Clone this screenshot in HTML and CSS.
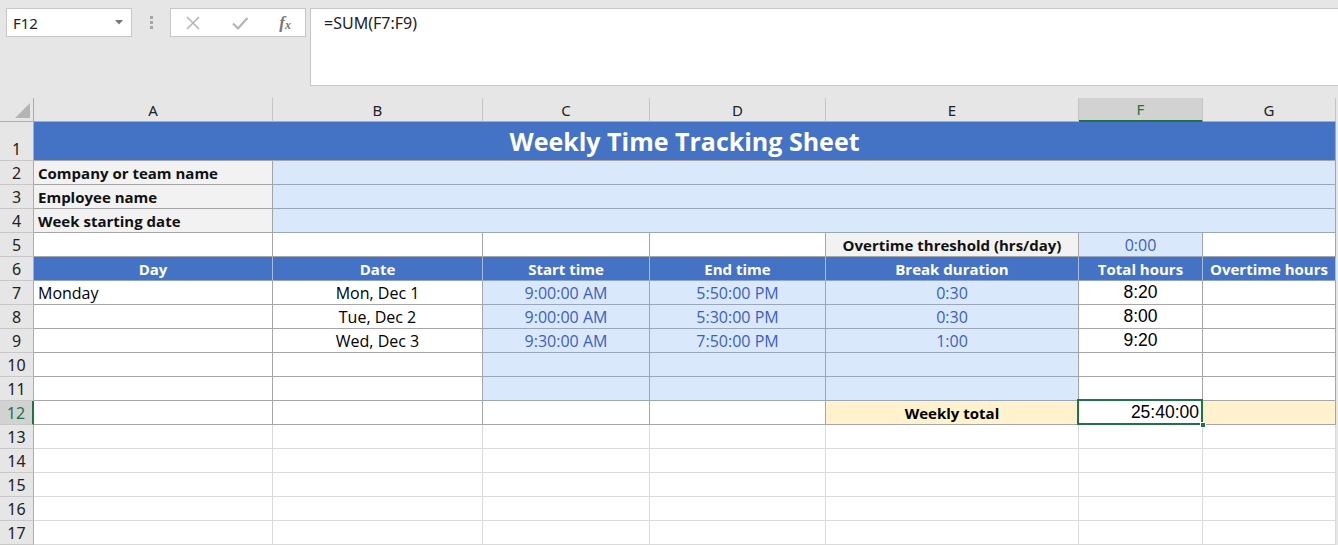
FILE: index.html
```html
<!DOCTYPE html>
<html lang="en">
<head>
  <meta charset="UTF-8">
  <title>Weekly Time Tracking Sheet</title>
  <link rel="stylesheet" href="styles.css">
</head>
<body>
  <!-- Formula bar -->
  <div class="toolbar">
    <div class="namebox">
      <span>F12</span>
      <svg class="caret" width="8" height="5" viewBox="0 0 8 5"><path d="M0 0h8L4 4.5z" fill="#777"/></svg>
    </div>
    <div class="grip"><i></i><i></i><i></i></div>
    <div class="fx-buttons">
      <svg width="16" height="16" viewBox="0 0 16 16"><path d="M2 2l12 12M14 2L2 14" stroke="#b5b5b5" stroke-width="1.6" fill="none"/></svg>
      <svg width="18" height="16" viewBox="0 0 18 16"><path d="M2 8.5l5 5L16.5 3" stroke="#b5b5b5" stroke-width="2.2" fill="none"/></svg>
      <span class="fx">f<sub>x</sub></span>
    </div>
    <div class="formula">=SUM(F7:F9)</div>
  </div>

  <!-- Sheet grid -->
  <div class="sheet">
    <div class="ch corner"><span class="tri"></span></div>
    <div class="ch">A</div>
    <div class="ch">B</div>
    <div class="ch">C</div>
    <div class="ch">D</div>
    <div class="ch">E</div>
    <div class="ch active">F</div>
    <div class="ch">G</div>

    <div class="rh">1</div>
    <div class="c t title span7">Weekly Time Tracking Sheet</div>

    <div class="rh">2</div>
    <div class="c t lbl">Company or team name</div>
    <div class="c t in span6"></div>

    <div class="rh">3</div>
    <div class="c t lbl">Employee name</div>
    <div class="c t in span6"></div>

    <div class="rh">4</div>
    <div class="c t lbl">Week starting date</div>
    <div class="c t in span6"></div>

    <div class="rh">5</div>
    <div class="c t"></div>
    <div class="c t"></div>
    <div class="c t"></div>
    <div class="c t"></div>
    <div class="c t lbl center">Overtime threshold (hrs/day)</div>
    <div class="c t in">0:00</div>
    <div class="c t"></div>

    <div class="rh">6</div>
    <div class="c t hd">Day</div>
    <div class="c t hd">Date</div>
    <div class="c t hd">Start time</div>
    <div class="c t hd">End time</div>
    <div class="c t hd">Break duration</div>
    <div class="c t hd">Total hours</div>
    <div class="c t hd">Overtime hours</div>

    <div class="rh">7</div>
    <div class="c t">Monday</div>
    <div class="c t center">Mon, Dec 1</div>
    <div class="c t in">9:00:00 AM</div>
    <div class="c t in">5:50:00 PM</div>
    <div class="c t in">0:30</div>
    <div class="c t num">8:20</div>
    <div class="c t"></div>

    <div class="rh">8</div>
    <div class="c t"></div>
    <div class="c t center">Tue, Dec 2</div>
    <div class="c t in">9:00:00 AM</div>
    <div class="c t in">5:30:00 PM</div>
    <div class="c t in">0:30</div>
    <div class="c t num">8:00</div>
    <div class="c t"></div>

    <div class="rh">9</div>
    <div class="c t"></div>
    <div class="c t center">Wed, Dec 3</div>
    <div class="c t in">9:30:00 AM</div>
    <div class="c t in">7:50:00 PM</div>
    <div class="c t in">1:00</div>
    <div class="c t num">9:20</div>
    <div class="c t"></div>

    <div class="rh">10</div>
    <div class="c t"></div>
    <div class="c t"></div>
    <div class="c t in"></div>
    <div class="c t in"></div>
    <div class="c t in"></div>
    <div class="c t"></div>
    <div class="c t"></div>

    <div class="rh">11</div>
    <div class="c t"></div>
    <div class="c t"></div>
    <div class="c t in"></div>
    <div class="c t in"></div>
    <div class="c t in"></div>
    <div class="c t"></div>
    <div class="c t"></div>

    <div class="rh active">12</div>
    <div class="c t"></div>
    <div class="c t"></div>
    <div class="c t"></div>
    <div class="c t"></div>
    <div class="c t yel bold center">Weekly total</div>
    <div class="c t num right selected">25:40:00</div>
    <div class="c t yel"></div>

    <div class="rh">13</div>
    <div class="c"></div><div class="c"></div><div class="c"></div><div class="c"></div><div class="c"></div><div class="c"></div><div class="c"></div>
    <div class="rh">14</div>
    <div class="c"></div><div class="c"></div><div class="c"></div><div class="c"></div><div class="c"></div><div class="c"></div><div class="c"></div>
    <div class="rh">15</div>
    <div class="c"></div><div class="c"></div><div class="c"></div><div class="c"></div><div class="c"></div><div class="c"></div><div class="c"></div>
    <div class="rh">16</div>
    <div class="c"></div><div class="c"></div><div class="c"></div><div class="c"></div><div class="c"></div><div class="c"></div><div class="c"></div>
    <div class="rh">17</div>
    <div class="c"></div><div class="c"></div><div class="c"></div><div class="c"></div><div class="c"></div><div class="c"></div><div class="c"></div>
  </div>
</body>
</html>
```

FILE: styles.css
```css
body {
  margin: 0;
  background-color: #e6e6e6;
  font-family: "Open Sans", "Noto Sans", sans-serif;
  color: #000;
}

/* Formula bar */
.toolbar {
  height: 98px;
  box-sizing: border-box;
  padding-top: 8px;
  display: flex;
  align-items: flex-start;
}

.namebox {
  width: 126px;
  height: 29px;
  margin-left: 6px;
  box-sizing: border-box;
  background-color: #fff;
  border: 1px solid #c6c6c6;
  display: flex;
  align-items: center;
  justify-content: space-between;
  padding: 0 8px 0 6px;
  font-family: "Noto Sans", sans-serif;
  font-size: 15px;
  color: #222;
}

.grip {
  width: 38px;
  height: 29px;
  display: flex;
  flex-direction: column;
  align-items: center;
  justify-content: center;
  gap: 2px;
}

.grip i {
  width: 3px;
  height: 3px;
  background-color: #a6a6a6;
}

.fx-buttons {
  width: 136px;
  height: 29px;
  box-sizing: border-box;
  background-color: #fff;
  border: 1px solid #c6c6c6;
  display: flex;
  align-items: center;
  padding: 0 14px 0 14px;
  justify-content: space-between;
}

.fx {
  font-family: "Liberation Serif", serif;
  font-style: italic;
  font-weight: bold;
  font-size: 17px;
  color: #777;
  line-height: 1;
}

.fx sub {
  font-size: 12px;
  vertical-align: -1px;
}

.formula {
  flex: 1;
  height: 78px;
  margin-left: 4px;
  box-sizing: border-box;
  background-color: #fff;
  border: 1px solid #c6c6c6;
  border-right: none;
  padding: 3px 13px;
  font-family: "Noto Sans", sans-serif;
  font-size: 16px;
  color: #222;
}

/* Sheet */
.sheet {
  display: grid;
  grid-template-columns: 34px 239px 210px 167px 176px 253px 124px 133px;
  grid-template-rows: 24px 39px repeat(16, 24px);
  width: 1336px;
}

.ch {
  background-color: #e6e6e6;
  border-right: 1px solid #c4c4c4;
  border-bottom: 1px solid #ababab;
  display: flex;
  align-items: center;
  justify-content: center;
  font-family: "Noto Sans", sans-serif;
  font-size: 15px;
  color: #222;
  box-sizing: border-box;
}

.ch.corner {
  position: relative;
  border-right: 1px solid #ababab;
}

.tri {
  position: absolute;
  right: 3px;
  bottom: 3px;
  width: 0;
  height: 0;
  border-left: 15px solid transparent;
  border-bottom: 15px solid #b4b4b4;
}

.ch.active {
  background-color: #d2d2d2;
  color: #217346;
  border-bottom: 2px solid #217346;
}

.rh {
  background-color: #e6e6e6;
  border-right: 1px solid #ababab;
  border-bottom: 1px solid #c8c8c8;
  display: flex;
  align-items: flex-end;
  justify-content: center;
  font-family: "Noto Sans", sans-serif;
  font-size: 16px;
  line-height: 22px;
  color: #222;
  box-sizing: border-box;
}

.rh.active {
  background-color: #d2d2d2;
  color: #217346;
  border-right: 2px solid #217346;
}

.c {
  background-color: #fff;
  border-right: 1px solid #dadada;
  border-bottom: 1px solid #dadada;
  display: flex;
  align-items: center;
  padding: 0 4px;
  font-size: 16px;
  white-space: nowrap;
  overflow: hidden;
  box-sizing: border-box;
}

.c.t {
  border-color: #a6a6a6;
}

.span7 {
  grid-column: span 7;
}

.span6 {
  grid-column: span 6;
}

.title {
  background-color: #4472c4;
  color: #fff;
  font-weight: bold;
  font-size: 25px;
  justify-content: center;
}

.hd {
  background-color: #4472c4;
  color: #fff;
  font-weight: bold;
  font-size: 15px;
  justify-content: center;
}

.c.t.hd {
  border-right-color: #a9bbdc;
  border-bottom-color: #8ea3c9;
}

.lbl {
  background-color: #f2f2f2;
  font-weight: bold;
  font-size: 15px;
  color: #111;
}

.in {
  background-color: #dae8fc;
  color: #3a5fc4;
  justify-content: center;
}

.c.t.in {
  border-color: #9aa7bb;
}

.center {
  justify-content: center;
}

.right {
  justify-content: flex-end;
}

.bold {
  font-weight: bold;
  font-size: 15px;
}

.num {
  font-family: "Liberation Sans", Arial, sans-serif;
  font-size: 17.5px;
  justify-content: center;
}

.num.right {
  justify-content: flex-end;
  padding-right: 3px;
}

.yel {
  background-color: #fff2cc;
}

.selected {
  position: relative;
  overflow: visible;
}

.selected::before {
  content: "";
  position: absolute;
  left: -2px;
  top: -2px;
  right: -1px;
  bottom: -1px;
  border: 2px solid #217346;
}

.selected::after {
  content: "";
  position: absolute;
  right: -4px;
  bottom: -4px;
  width: 6px;
  height: 6px;
  background-color: #217346;
  border: 1px solid #fff;
  box-sizing: border-box;
}
```
